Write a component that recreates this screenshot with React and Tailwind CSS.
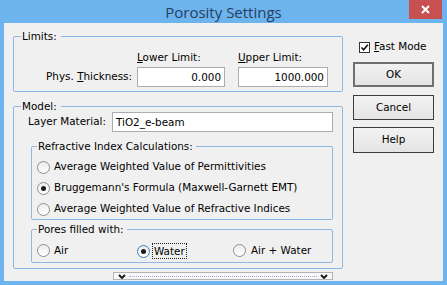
import React from 'react';

const Radio = ({ checked, focus }) => (
  <span
    className={`w-[13px] h-[13px] shrink-0 rounded-full border ${
      focus ? 'border-[#3c7fb1]' : 'border-[#8c8f8f]'
    } bg-linear-to-b from-[#ececec] to-white flex items-center justify-center`}
  >
    {checked && <span className="w-[5px] h-[5px] rounded-full bg-[#1c1c1c]" />}
  </span>
);

const Chevron = () => (
  <svg width="8" height="5" viewBox="0 0 8 5">
    <path d="M1 1 L4 4 L7 1" stroke="#111" strokeWidth="1.8" fill="none" />
  </svg>
);

const App = () => {
  return (
    <div className="w-[447px] h-[285px] bg-[#6db3ee] flex flex-col font-['DejaVu_Sans',sans-serif] text-[10.4px] text-black">
      {/* Title bar */}
      <div className="h-[23px] grid grid-cols-[1fr_auto_1fr] items-start">
        <div />
        <div className="pt-[2px] leading-[21px] text-[15px] text-[#24415f] font-['Open_Sans',sans-serif]">
          Porosity Settings
        </div>
        <div className="flex justify-end pr-[5px]">
          <div className="w-[33px] h-[19px] bg-[#c75050] flex items-center justify-center">
            <svg width="9" height="9" viewBox="0 0 9 9">
              <path d="M1 1 L8 8 M8 1 L1 8" stroke="#fff" strokeWidth="2" />
            </svg>
          </div>
        </div>
      </div>

      {/* Client area */}
      <div className="flex-1 mx-[4px] mb-[4px] bg-[#f0f0f0] flex pl-[9px]">
        {/* Left column */}
        <div className="w-[330px] flex flex-col">
          <fieldset className="mt-[7px] border border-[#8bb9e3] rounded-[2px] p-0 pb-[4px]">
            <legend className="ml-[7px] pl-[1px] pr-[4px] leading-[12px]">Limits:</legend>
            <div className="flex pl-[123px] pt-[8px] leading-[14px]">
              <span className="w-[101px]">
                <span className="underline">L</span>ower Limit:
              </span>
              <span>
                <span className="underline">U</span>pper Limit:
              </span>
            </div>
            <div className="flex items-center mt-[3px]">
              <span className="w-[118px] text-right">
                Phys. <span className="underline">T</span>hickness:
              </span>
              <div className="ml-[5px] w-[88px] h-[20px] border border-[#abadb3] bg-white text-right pr-[3px] leading-[18px]">
                0.000
              </div>
              <div className="ml-[13px] w-[90px] h-[20px] border border-[#abadb3] bg-white text-right pr-[3px] leading-[18px]">
                1000.000
              </div>
            </div>
          </fieldset>

          <fieldset className="mt-[8px] border border-[#8bb9e3] rounded-[2px] p-0 pb-[5px]">
            <legend className="ml-[7px] pl-[1px] pr-[4px] leading-[12px]">Model:</legend>
            <div className="flex items-center h-[20px] pl-[14px]">
              <span className="w-[84px]">Layer Material:</span>
              <div className="w-[221px] h-[20px] border border-[#abadb3] bg-white pl-[3px] leading-[18px]">
                TiO2_e-beam
              </div>
            </div>

            <fieldset className="ml-[17px] mr-[9px] mt-[8px] border border-[#8bb9e3] rounded-[2px] p-0 pt-[5px] flex flex-col gap-[1px]">
              <legend className="ml-[5px] pl-[1px] pr-[3px] leading-[12px]">Refractive Index Calculations:</legend>
              <div className="h-[20px] flex items-center pl-[5px] gap-[4px]">
                <Radio />
                <span>Average Weighted Value of Permittivities</span>
              </div>
              <div className="h-[20px] flex items-center pl-[5px] gap-[4px]">
                <Radio checked />
                <span>Bruggemann's Formula (Maxwell-Garnett EMT)</span>
              </div>
              <div className="h-[20px] flex items-center pl-[5px] gap-[4px]">
                <Radio />
                <span>Average Weighted Value of Refractive Indices</span>
              </div>
            </fieldset>

            <fieldset className="ml-[17px] mr-[9px] mt-[3px] border border-[#8bb9e3] rounded-[2px] p-0 pt-[6px] pb-[1px]">
              <legend className="ml-[5px] pl-[1px] pr-[3px] leading-[12px]">Pores filled with:</legend>
              <div className="h-[20px] flex items-center pl-[5px]">
                <div className="w-[100px] flex items-center gap-[4px]">
                  <Radio />
                  <span>Air</span>
                </div>
                <div className="w-[96px] flex items-center gap-[2px]">
                  <Radio checked focus />
                  <span className="border border-dotted border-[#222] px-[1px] leading-[14px]">Water</span>
                </div>
                <div className="flex items-center gap-[5px]">
                  <Radio />
                  <span>Air + Water</span>
                </div>
              </div>
            </fieldset>
          </fieldset>

          <div className="mt-[3px] ml-[100px] w-[220px] h-[8px] border border-[#b3b3b3] bg-[#f7f7f7] flex items-center px-[4px]">
            <Chevron />
            <div className="flex-1 mx-[3px] border-t border-dotted border-[#9ab0c8]" />
            <Chevron />
          </div>
        </div>

        {/* Right column */}
        <div className="ml-[10px] w-[81px] flex flex-col">
          <div className="mt-[17px] h-[14px] flex items-center">
            <span className="ml-[6px] w-[11px] h-[11px] border border-[#333] bg-white flex items-center justify-center">
              <svg width="9" height="9" viewBox="0 0 9 9">
                <path d="M1.5 4.5 L3.7 6.8 L7.8 1.8" stroke="#111" strokeWidth="1.6" fill="none" />
              </svg>
            </span>
            <span className="ml-[4px]">
              <span className="underline">F</span>ast Mode
            </span>
          </div>
          <button className="mt-[8px] h-[25px] border-2 border-[#6f6f6f] bg-linear-to-b from-[#f2f2f2] to-[#e4e4e4]">
            OK
          </button>
          <button className="mt-[8px] h-[25px] border border-[#3c3c3c] bg-linear-to-b from-[#f2f2f2] to-[#e4e4e4]">
            Cancel
          </button>
          <button className="mt-[7px] h-[26px] border border-[#3c3c3c] bg-linear-to-b from-[#f2f2f2] to-[#e4e4e4]">
            Help
          </button>
        </div>
      </div>
    </div>
  );
};

export default App;
